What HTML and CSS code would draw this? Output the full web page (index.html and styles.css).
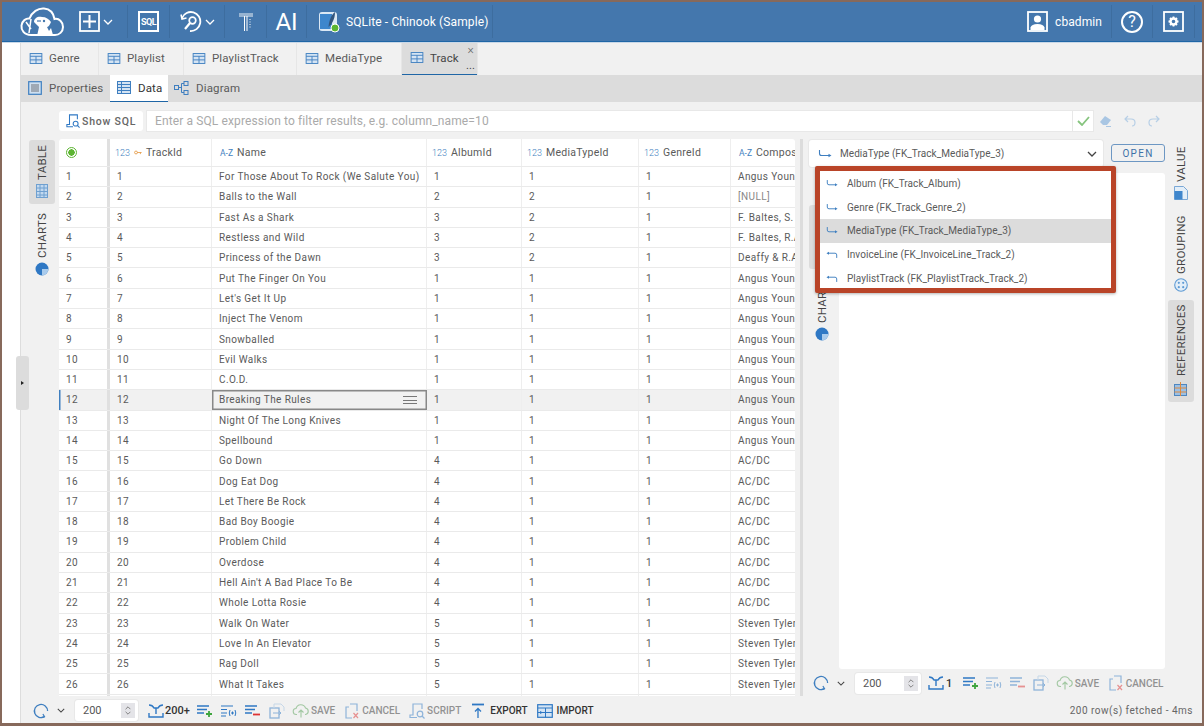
FILE: index.html
```html
<!DOCTYPE html>
<html lang="en">
<head>
    <meta charset="UTF-8">
    <title>CloudBeaver - Track</title>
    <link rel="stylesheet" href="styles.css">
</head>
<body>
<svg class="sprites">
    <symbol id="i-table" viewBox="0 0 14 12">
        <rect x=".6" y=".6" width="12.8" height="10.8" fill="#d5e4f3" stroke="#3f7fc0"/>
        <path d="M.6 3.6h12.8M.6 7.5h12.8M7 3.6v7.8" stroke="#3f7fc0" fill="none"/>
    </symbol>
    <symbol id="i-fk-out" viewBox="0 0 14 10">
        <path d="M1.5 1v3.5q0 2 2 2h8" fill="none" stroke="#3f7fc0" stroke-width="1.1"/>
        <path d="M10.5 4.8l3 1.7-3 1.7z" fill="#3f7fc0"/>
    </symbol>
    <symbol id="i-fk-in" viewBox="0 0 14 10">
        <path d="M12.5 9V5.5q0-2-2-2h-8" fill="none" stroke="#3f7fc0" stroke-width="1.1"/>
        <path d="M3.5 1.8l-3 1.7 3 1.7z" fill="#3f7fc0"/>
    </symbol>
    <symbol id="i-pie" viewBox="0 0 14 14">
        <circle cx="7" cy="7" r="6.5" fill="#2f78c4"/>
        <path d="M7 7V.5A6.5 6.5 0 0 0 .5 7z" fill="#a9cbec" transform="rotate(180 7 7)"/>
    </symbol>
    <symbol id="i-refresh" viewBox="0 0 16 16">
        <path d="M11.5 13.6A6.6 6.6 0 1 1 14.6 8" fill="none" stroke="#3f7fc0" stroke-width="1.3"/>
        <path d="M8.5 14.6l3-1-1.6-2.6" fill="none" stroke="#3f7fc0" stroke-width="1.2"/>
    </symbol>
    <symbol id="i-expand" viewBox="0 0 16 14">
        <path d="M1 1q3.5 0 5 3h4q1.500-3 5-3M8 4v6M1 9v4h14V9" fill="none" stroke="#2f78c4" stroke-width="1.4"/>
    </symbol>
    <symbol id="i-add" viewBox="0 0 18 14">
        <path d="M1 2h12M1 5.500h10M1 9h7" stroke="#2f78c4" stroke-width="1.5"/>
        <path d="M13 7v6M10 10h6" stroke="#3fa53f" stroke-width="1.800"/>
    </symbol>
    <symbol id="i-dup" viewBox="0 0 18 14">
        <path d="M1 2h12M1 5.500h6M1 9h6M1 12h5" stroke="#2f78c4" stroke-width="1.200"/>
        <path d="M10 6q-1.500 3 0 6M15 6q1.500 3 0 6M11 9h3M12.500 7.500v3" stroke="#2f78c4" fill="none"/>
    </symbol>
    <symbol id="i-del" viewBox="0 0 18 14">
        <path d="M1 2h12M1 5.500h10M1 9h7" stroke="#2f78c4" stroke-width="1.500"/>
        <path d="M9 10.500h7" stroke="#d33" stroke-width="1.800"/>
    </symbol>
    <symbol id="i-copy" viewBox="0 0 18 16">
        <rect x="2" y="5" width="9" height="10" fill="none" stroke="#2f78c4" stroke-width="1.300"/>
        <path d="M6 5V1h7l3 3v4" fill="none" stroke="#9dbfe0"/>
        <path d="M5 10h8m-2-2 2 2-2 2" fill="none" stroke="#2f78c4"/>
    </symbol>
    <symbol id="i-save" viewBox="0 0 16 14">
        <path d="M4 10.500H3.500a3 3 0 0 1-.5-6A5 5 0 0 1 12.500 4 3.300 3.300 0 0 1 12.500 10.500H12M8 13.500V6M5.500 8.500 8 6l2.500 2.500" fill="none" stroke="#55a055" stroke-width="1.100"/>
    </symbol>
    <symbol id="i-cancel" viewBox="0 0 16 16">
        <path d="M8 15H2V4h3M6 1h7v7" fill="none" stroke="#2f78c4" stroke-width="1.200"/>
        <path d="M9.500 10l4.500 5M14 10l-4.500 5" stroke="#d33" stroke-width="1.200"/>
    </symbol>
    <symbol id="i-script" viewBox="0 0 16 16">
        <path d="M6 1h-2v11H1v2.500h7M6 1h7v5" fill="none" stroke="#2f78c4" stroke-width="1.200"/>
        <circle cx="11" cy="11" r="2.800" fill="none" stroke="#2f78c4" stroke-width="1.200"/>
        <path d="M13 13l2.500 2.500" stroke="#2f78c4" stroke-width="1.200"/>
    </symbol>
    <symbol id="i-export" viewBox="0 0 16 16">
        <path d="M2 1.500h12" stroke="#2f78c4" stroke-width="1.800"/>
        <path d="M8 15V6M5 8.500 8 5.500l3 3" fill="none" stroke="#2f78c4" stroke-width="1.300"/>
    </symbol>
    <symbol id="i-import" viewBox="0 0 16 14">
        <rect x=".7" y=".7" width="14.600" height="12.600" fill="#d5e4f3" stroke="#2f78c4" stroke-width="1.200"/>
        <path d="M.7 4h14.600M.7 8.500h14.600M8.500 4v9.300" stroke="#2f78c4"/>
        <path d="M3 7l3 1.500L3 10z" fill="#2f78c4"/>
    </symbol>
    <symbol id="i-chevron" viewBox="0 0 10 6">
        <path d="M1 1l4 4 4-4" fill="none" stroke="currentColor" stroke-width="1.300"/>
    </symbol>
    <symbol id="i-grid" viewBox="0 0 12 14">
        <rect x=".5" y=".5" width="11" height="13" fill="#c3d9ef" stroke="#6fa0d0"/>
        <path d="M4 .5v13M8 .5v13M.5 4h11M.5 7.500h11M.5 11h11" stroke="#6fa0d0" fill="none"/>
    </symbol>
</svg>

<div class="frame">
    <header class="topbar">
        <div class="tb-cell tb-logo">
            <svg width="44" height="30" viewBox="0 0 44 30">
                <path d="M11 28C4 28 1 23 1.500 18.500 2 14 6 11 9.500 11.500 12 5 18 1 24 1.500 30 2 33.500 6 34.500 12 39 11 43 15 43 20 43 25 39 28 35 28Z" fill="none" stroke="#fff" stroke-width="2"/>
                <path d="M17 29 19 20 14 15C14 11 18 9 22 10 26 10 29 12 31 15 30 18 28 20 27 20L29 24 31 21 33 28Z" fill="#fff"/>
                <path d="M6 15 11 22M11 12 9 26" fill="none" stroke="#fff" stroke-width="1.500"/>
                <circle cx="24" cy="14" r="1.200" fill="#4477ad"/>
                <path d="M17 14h4" stroke="#4477ad" stroke-width="1.200"/>
            </svg>
        </div>
        <div class="tb-cell tb-add">
            <svg class="tb-box" width="21" height="21" viewBox="0 0 21 21">
                <rect x="1" y="1" width="19" height="19" fill="none" stroke="#fff" stroke-width="1.800"/>
                <path d="M10.500 4v13M4 10.500h13" stroke="#fff" stroke-width="2"/>
            </svg>
            <svg class="tb-chev" width="10" height="6"><use href="#i-chevron"/></svg>
        </div>
        <div class="tb-cell tb-sql">
            <span class="sql-box">SQL</span>
        </div>
        <div class="tb-cell tb-tools">
            <svg width="23" height="21" viewBox="0 0 23 21">
                <path d="M2 7A9.500 9.500 0 1 1 10 20" fill="none" stroke="#fff" stroke-width="1.800"/>
                <path d="M1 3.500 2 8 6.500 7" fill="none" stroke="#fff" stroke-width="1.500"/>
                <path d="M5 18l5-6" stroke="#fff" stroke-width="2.200"/>
                <circle cx="12.500" cy="9.500" r="3.300" fill="none" stroke="#fff" stroke-width="1.700"/>
            </svg>
            <svg class="tb-chev" width="10" height="6"><use href="#i-chevron"/></svg>
        </div>
        <div class="tb-cell tb-t">
            <svg width="16" height="20" viewBox="0 0 16 20">
                <path d="M1 2h14M1 4h14" stroke="#fff" stroke-width=".9"/>
                <path d="M6.500 4v15M9 4v15" stroke="#fff" stroke-width="1"/>
                <path d="M12 7v10" stroke="#fff" stroke-dasharray="1 1.500"/>
            </svg>
        </div>
        <div class="tb-cell tb-ai">AI</div>
        <div class="tb-cell tb-conn">
            <span class="conn-icon">
                <svg width="22" height="22" viewBox="0 0 22 22">
                    <rect x="1" y="1" width="18" height="19" rx="3" fill="#dbe8f5"/>
                    <rect x="2" y="3" width="12" height="15" fill="#3e86cc"/>
                    <path d="M17 1C13 4 11 10 10.500 16 14 13 17 8 17 1Z" fill="#33557d"/>
                    <circle cx="17" cy="17" r="4" fill="#5cb531" stroke="#fff"/>
                </svg>
            </span>
            <span>SQLite - Chinook (Sample)</span>
        </div>
        <div class="tb-spacer"></div>
        <div class="tb-cell tb-user">
            <svg width="21" height="21" viewBox="0 0 21 21">
                <rect x="1" y="1" width="19" height="19" fill="none" stroke="#fff" stroke-width="1.800"/>
                <circle cx="10.500" cy="8" r="3.600" fill="#fff"/>
                <path d="M3.500 19v-2.500q1-3.500 7-3.500t7 3.500V19z" fill="#fff"/>
            </svg>
            <span>cbadmin</span>
        </div>
        <div class="tb-cell tb-help">
            <span class="help-ring">?</span>
        </div>
        <div class="tb-cell tb-gear">
            <svg width="21" height="21" viewBox="0 0 21 21">
                <rect x="1" y="1" width="19" height="19" fill="none" stroke="#fff" stroke-width="1.800"/>
                <circle cx="10.500" cy="10.500" r="3" fill="none" stroke="#fff" stroke-width="2.400"/>
                <path d="M10.500 5.500v2M10.500 13.500v2M5.500 10.500h2M13.500 10.500h2M7 7l1.500 1.500M12.500 12.500 14 14M14 7l-1.500 1.500M8.500 12.500 7 14" stroke="#fff" stroke-width="1.800"/>
            </svg>
        </div>
    </header>

    <div class="main">
        <div class="left-strip"></div>
        <div class="workspace">
            <nav class="tabs">
                <div class="tab tab-genre"><svg width="14" height="11"><use href="#i-table"/></svg>Genre</div>
                <div class="tab tab-playlist"><svg width="14" height="11"><use href="#i-table"/></svg>Playlist</div>
                <div class="tab tab-pt"><svg width="14" height="11"><use href="#i-table"/></svg>PlaylistTrack</div>
                <div class="tab tab-media"><svg width="14" height="11"><use href="#i-table"/></svg>MediaType</div>
                <div class="tab tab-track active"><svg width="14" height="11"><use href="#i-table"/></svg>Track
                    <span class="tab-close">×</span>
                    <span class="tab-more">...</span>
                </div>
            </nav>
            <nav class="subtabs">
                <div class="subtab sub-props">
                    <svg width="14" height="14" viewBox="0 0 14 14"><rect x=".7" y=".7" width="12.600" height="12.600" fill="#cfe0f1" stroke="#3f7fc0" stroke-width="1.200"/><rect x="3" y="3" width="8" height="8" fill="#9fa9b5"/></svg>
                    Properties
                </div>
                <div class="subtab sub-data active">
                    <svg width="14" height="13" viewBox="0 0 14 13"><rect x=".5" y=".5" width="13" height="12" fill="#d5e4f3" stroke="#3f7fc0"/><path d="M.5 3.500h13M.5 6.500h13M.5 9.500h13M4.500.5v12" stroke="#3f7fc0" fill="none"/></svg>
                    Data
                </div>
                <div class="subtab sub-diagram">
                    <svg width="15" height="14" viewBox="0 0 15 14"><rect x=".5" y="4.500" width="4" height="4" fill="none" stroke="#3f7fc0"/><rect x="10" y=".5" width="4" height="4" fill="none" stroke="#3f7fc0"/><rect x="10" y="9.500" width="4" height="4" fill="none" stroke="#3f7fc0"/><path d="M4.500 6.500h3M7.500 2.500v9M7.500 2.500H10M7.500 11.500H10" stroke="#3f7fc0" fill="none"/></svg>
                    Diagram
                </div>
            </nav>

            <div class="filter-row">
                <button class="show-sql">
                    <svg width="14" height="14"><use href="#i-script"/></svg>
                    Show SQL
                </button>
                <div class="filter-input">Enter a SQL expression to filter results, e.g. column_name=10</div>
                <div class="filter-ok">
                    <svg width="13" height="10" viewBox="0 0 13 10"><path d="M1 5l4 4 7-8" fill="none" stroke="#86c47e" stroke-width="1.800"/></svg>
                </div>
                <div class="filter-actions">
                    <svg width="13" height="12" viewBox="0 0 13 12"><path d="M1 7l5-6 6 4-4 5H4z" fill="#a9c6e3"/><path d="M7 11.500h5" stroke="#a9c6e3"/></svg>
                    <svg width="12" height="12" viewBox="0 0 12 12"><path d="M4 1 1 4l3 3M1 4h6q4 0 4 3.500T8 11" fill="none" stroke="#b7cfe6" stroke-width="1.200"/></svg>
                    <svg width="12" height="12" viewBox="0 0 12 12"><path d="M8 1l3 3-3 3M11 4H5Q1 4 1 7.500T4 11" fill="none" stroke="#b7cfe6" stroke-width="1.200"/></svg>
                </div>
            </div>

            <div class="panes">
                <div class="rail rail-left">
                    <div class="vtab active vtab-table"><svg width="12" height="14"><use href="#i-grid"/></svg><span>TABLE</span></div>
                    <div class="vtab vtab-charts"><svg width="14" height="14"><use href="#i-pie"/></svg><span>CHARTS</span></div>
                </div>

                <div class="grid">
                    <div class="row head">
                        <div class="cell"><span class="status-dot"></span></div>
                        <div class="cell"><span class="t-num">123</span><svg class="key" width="8" height="5" viewBox="0 0 10 5"><circle cx="2.500" cy="2.500" r="1.800" fill="none" stroke="#e5963c"/><path d="M4 2.500h5.500M8 2.500v2" stroke="#e5963c"/></svg>TrackId</div>
                        <div class="cell"><span class="t-az">A-Z</span>Name</div>
                        <div class="cell"><span class="t-num">123</span>AlbumId</div>
                        <div class="cell"><span class="t-num">123</span>MediaTypeId</div>
                        <div class="cell"><span class="t-num">123</span>GenreId</div>
                        <div class="cell"><span class="t-az">A-Z</span>Composer</div>
                    </div>
                    <div class="row"><div class="cell">1</div><div class="cell">1</div><div class="cell">For Those About To Rock (We Salute You)</div><div class="cell">1</div><div class="cell">1</div><div class="cell">1</div><div class="cell">Angus Young, Malcolm Young</div></div>
                    <div class="row"><div class="cell">2</div><div class="cell">2</div><div class="cell">Balls to the Wall</div><div class="cell">2</div><div class="cell">2</div><div class="cell">1</div><div class="cell null">[NULL]</div></div>
                    <div class="row"><div class="cell">3</div><div class="cell">3</div><div class="cell">Fast As a Shark</div><div class="cell">3</div><div class="cell">2</div><div class="cell">1</div><div class="cell">F. Baltes, S. Kaufman</div></div>
                    <div class="row"><div class="cell">4</div><div class="cell">4</div><div class="cell">Restless and Wild</div><div class="cell">3</div><div class="cell">2</div><div class="cell">1</div><div class="cell">F. Baltes, R.A. Smith</div></div>
                    <div class="row"><div class="cell">5</div><div class="cell">5</div><div class="cell">Princess of the Dawn</div><div class="cell">3</div><div class="cell">2</div><div class="cell">1</div><div class="cell">Deaffy &amp; R.A. Smith</div></div>
                    <div class="row"><div class="cell">6</div><div class="cell">6</div><div class="cell">Put The Finger On You</div><div class="cell">1</div><div class="cell">1</div><div class="cell">1</div><div class="cell">Angus Young, Malcolm Young</div></div>
                    <div class="row"><div class="cell">7</div><div class="cell">7</div><div class="cell">Let's Get It Up</div><div class="cell">1</div><div class="cell">1</div><div class="cell">1</div><div class="cell">Angus Young, Malcolm Young</div></div>
                    <div class="row"><div class="cell">8</div><div class="cell">8</div><div class="cell">Inject The Venom</div><div class="cell">1</div><div class="cell">1</div><div class="cell">1</div><div class="cell">Angus Young, Malcolm Young</div></div>
                    <div class="row"><div class="cell">9</div><div class="cell">9</div><div class="cell">Snowballed</div><div class="cell">1</div><div class="cell">1</div><div class="cell">1</div><div class="cell">Angus Young, Malcolm Young</div></div>
                    <div class="row"><div class="cell">10</div><div class="cell">10</div><div class="cell">Evil Walks</div><div class="cell">1</div><div class="cell">1</div><div class="cell">1</div><div class="cell">Angus Young, Malcolm Young</div></div>
                    <div class="row"><div class="cell">11</div><div class="cell">11</div><div class="cell">C.O.D.</div><div class="cell">1</div><div class="cell">1</div><div class="cell">1</div><div class="cell">Angus Young, Malcolm Young</div></div>
                    <div class="row selected"><div class="cell">12</div><div class="cell">12</div><div class="cell focus">Breaking The Rules<span class="cell-menu"></span></div><div class="cell">1</div><div class="cell">1</div><div class="cell">1</div><div class="cell">Angus Young, Malcolm Young</div></div>
                    <div class="row"><div class="cell">13</div><div class="cell">13</div><div class="cell">Night Of The Long Knives</div><div class="cell">1</div><div class="cell">1</div><div class="cell">1</div><div class="cell">Angus Young, Malcolm Young</div></div>
                    <div class="row"><div class="cell">14</div><div class="cell">14</div><div class="cell">Spellbound</div><div class="cell">1</div><div class="cell">1</div><div class="cell">1</div><div class="cell">Angus Young, Malcolm Young</div></div>
                    <div class="row"><div class="cell">15</div><div class="cell">15</div><div class="cell">Go Down</div><div class="cell">4</div><div class="cell">1</div><div class="cell">1</div><div class="cell">AC/DC</div></div>
                    <div class="row"><div class="cell">16</div><div class="cell">16</div><div class="cell">Dog Eat Dog</div><div class="cell">4</div><div class="cell">1</div><div class="cell">1</div><div class="cell">AC/DC</div></div>
                    <div class="row"><div class="cell">17</div><div class="cell">17</div><div class="cell">Let There Be Rock</div><div class="cell">4</div><div class="cell">1</div><div class="cell">1</div><div class="cell">AC/DC</div></div>
                    <div class="row"><div class="cell">18</div><div class="cell">18</div><div class="cell">Bad Boy Boogie</div><div class="cell">4</div><div class="cell">1</div><div class="cell">1</div><div class="cell">AC/DC</div></div>
                    <div class="row"><div class="cell">19</div><div class="cell">19</div><div class="cell">Problem Child</div><div class="cell">4</div><div class="cell">1</div><div class="cell">1</div><div class="cell">AC/DC</div></div>
                    <div class="row"><div class="cell">20</div><div class="cell">20</div><div class="cell">Overdose</div><div class="cell">4</div><div class="cell">1</div><div class="cell">1</div><div class="cell">AC/DC</div></div>
                    <div class="row"><div class="cell">21</div><div class="cell">21</div><div class="cell">Hell Ain't A Bad Place To Be</div><div class="cell">4</div><div class="cell">1</div><div class="cell">1</div><div class="cell">AC/DC</div></div>
                    <div class="row"><div class="cell">22</div><div class="cell">22</div><div class="cell">Whole Lotta Rosie</div><div class="cell">4</div><div class="cell">1</div><div class="cell">1</div><div class="cell">AC/DC</div></div>
                    <div class="row"><div class="cell">23</div><div class="cell">23</div><div class="cell">Walk On Water</div><div class="cell">5</div><div class="cell">1</div><div class="cell">1</div><div class="cell">Steven Tyler, Joe Perry</div></div>
                    <div class="row"><div class="cell">24</div><div class="cell">24</div><div class="cell">Love In An Elevator</div><div class="cell">5</div><div class="cell">1</div><div class="cell">1</div><div class="cell">Steven Tyler, Joe Perry</div></div>
                    <div class="row"><div class="cell">25</div><div class="cell">25</div><div class="cell">Rag Doll</div><div class="cell">5</div><div class="cell">1</div><div class="cell">1</div><div class="cell">Steven Tyler, Joe Perry</div></div>
                    <div class="row"><div class="cell">26</div><div class="cell">26</div><div class="cell">What It Takes</div><div class="cell">5</div><div class="cell">1</div><div class="cell">1</div><div class="cell">Steven Tyler, Joe Perry</div></div>
                    <div class="row"><div class="cell"></div><div class="cell"></div><div class="cell"></div><div class="cell"></div><div class="cell"></div><div class="cell"></div><div class="cell"></div></div>
                </div>

                <div class="splitter"></div>

                <div class="ref-pane">
                    <div class="ref-head">
                        <div class="ref-select">
                            <svg width="14" height="10"><use href="#i-fk-out"/></svg>
                            <span>MediaType (FK_Track_MediaType_3)</span>
                            <svg class="ref-chev" width="10" height="6"><use href="#i-chevron"/></svg>
                        </div>
                        <button class="open-btn">OPEN</button>
                    </div>
                    <div class="ref-body">
                        <div class="rail rail-inner">
                            <div class="vtab active vtab-table"><svg width="12" height="14"><use href="#i-grid"/></svg><span>TABLE</span></div>
                            <div class="vtab vtab-charts"><svg width="14" height="14"><use href="#i-pie"/></svg><span>CHARTS</span></div>
                        </div>
                        <div class="ref-panel"></div>
                    </div>
                    <div class="tools tools-ref">
                        <svg width="16" height="16"><use href="#i-refresh"/></svg>
                        <svg class="chev" width="8" height="5"><use href="#i-chevron"/></svg>
                        <div class="num-input num-ref">200<span class="spin"><svg width="6" height="4"><use href="#i-chevron"/></svg><svg width="6" height="4"><use href="#i-chevron"/></svg></span></div>
                        <svg class="expand" width="16" height="14"><use href="#i-expand"/></svg>
                        <span class="count">1</span>
                        <svg width="18" height="14"><use href="#i-add"/></svg>
                        <svg class="off" width="18" height="14"><use href="#i-dup"/></svg>
                        <svg class="off" width="18" height="14"><use href="#i-del"/></svg>
                        <svg class="off" width="18" height="16"><use href="#i-copy"/></svg>
                        <div class="act off"><svg width="18" height="14"><use href="#i-save"/></svg>SAVE</div>
                        <div class="act off"><svg width="18" height="16"><use href="#i-cancel"/></svg>CANCEL</div>
                    </div>
                </div>

                <div class="rail rail-right">
                    <div class="vtab vtab-value">
                        <svg width="14" height="14" viewBox="0 0 14 14"><path d="M.5.500h9l4 4v9H.5z" fill="#e3eef8" stroke="#7aa8d6"/><rect x=".5" y="5" width="8" height="8.500" fill="#3f86cc"/></svg>
                        <span>VALUE</span>
                    </div>
                    <div class="vtab vtab-group">
                        <svg width="14" height="14" viewBox="0 0 14 14"><circle cx="7" cy="7" r="6.300" fill="#e3eef8" stroke="#5f9bd4" stroke-width="1.100"/><circle cx="4.800" cy="4.800" r="1.100" fill="#5f9bd4"/><circle cx="9.200" cy="4.800" r="1.100" fill="#5f9bd4"/><circle cx="4.800" cy="9.200" r="1.100" fill="#5f9bd4"/><circle cx="9.200" cy="9.200" r="1.100" fill="#5f9bd4"/></svg>
                        <span>GROUPING</span>
                    </div>
                    <div class="vtab active vtab-ref">
                        <svg width="13" height="14" viewBox="0 0 13 14"><rect x=".5" y="2.500" width="12" height="11" fill="#9cc0e4" stroke="#4d86c0"/><path d="M6.500 0v14M.5 6h12M.5 10h12" stroke="#e08a3c"/></svg>
                        <span>REFERENCES</span>
                    </div>
                </div>
            </div>

            <div class="tools tools-main">
                <svg width="16" height="16"><use href="#i-refresh"/></svg>
                <svg class="chev" width="8" height="5"><use href="#i-chevron"/></svg>
                <div class="num-input">200<span class="spin"><svg width="6" height="4"><use href="#i-chevron"/></svg><svg width="6" height="4"><use href="#i-chevron"/></svg></span></div>
                <svg class="expand" width="16" height="14"><use href="#i-expand"/></svg>
                <span class="count">200+</span>
                <svg width="18" height="14"><use href="#i-add"/></svg>
                <svg width="18" height="14"><use href="#i-dup"/></svg>
                <svg width="18" height="14"><use href="#i-del"/></svg>
                <svg class="off" width="18" height="16"><use href="#i-copy"/></svg>
                <div class="act off"><svg width="18" height="14"><use href="#i-save"/></svg>SAVE</div>
                <div class="act off"><svg width="18" height="16"><use href="#i-cancel"/></svg>CANCEL</div>
                <div class="act off"><svg width="18" height="16"><use href="#i-script"/></svg>SCRIPT</div>
                <div class="act act-on"><svg width="18" height="16"><use href="#i-export"/></svg>EXPORT</div>
                <div class="act act-on"><svg width="18" height="14"><use href="#i-import"/></svg>IMPORT</div>
                <div class="status">200 row(s) fetched - 4ms</div>
            </div>
        </div>
    </div>

    <!-- references dropdown, opened over the value panel -->
    <div class="ref-menu">
        <div class="ref-item"><svg width="12" height="9"><use href="#i-fk-out"/></svg>Album (FK_Track_Album)</div>
        <div class="ref-item"><svg width="12" height="9"><use href="#i-fk-out"/></svg>Genre (FK_Track_Genre_2)</div>
        <div class="ref-item current"><svg width="12" height="9"><use href="#i-fk-out"/></svg>MediaType (FK_Track_MediaType_3)</div>
        <div class="ref-item"><svg width="12" height="9"><use href="#i-fk-in"/></svg>InvoiceLine (FK_InvoiceLine_Track_2)</div>
        <div class="ref-item"><svg width="12" height="9"><use href="#i-fk-in"/></svg>PlaylistTrack (FK_PlaylistTrack_Track_2)</div>
    </div>

    <div class="nav-toggle"><span class="nav-arrow"></span></div>
</div>
</body>
</html>
```

FILE: styles.css
```css
* {
    box-sizing: border-box;
}

html, body {
    margin: 0;
    height: 100%;
    overflow: hidden;
}

body {
    font-family: Roboto, "Liberation Sans", sans-serif;
    font-size: 10px;
    color: #5a5a5a;
}

.sprites {
    display: none;
}

.frame {
    position: relative;
    width: 1204px;
    height: 726px;
    display: flex;
    flex-direction: column;
    border: 2px solid #87695b;
    border-bottom-width: 3px;
    background-color: #fff;
}

/* top bar */
.topbar {
    height: 40px;
    flex: none;
    display: flex;
    align-items: stretch;
    padding-right: 7px;
    background-color: #4477ad;
    border-bottom: 1.500px solid #1f66a6;
    box-shadow: 0 1px 0 #c9d8e8;
    color: #fff;
}

.tb-cell {
    display: flex;
    align-items: center;
    justify-content: center;
    margin: 3px 0;
    border-right: 1px solid #3d6d9f;
}

.tb-logo {
    width: 68px;
    justify-content: flex-start;
    padding-left: 18px;
    border-right: none;
}

.tb-add {
    width: 58px;
    gap: 3px;
    padding-right: 6px;
}

.tb-chev {
    color: #fff;
}

.tb-sql {
    width: 42px;
}

.sql-box {
    width: 21px;
    height: 21px;
    display: flex;
    align-items: center;
    justify-content: center;
    border: 2px solid #fff;
    color: #fff;
    font-size: 9px;
    font-weight: 700;
    letter-spacing: -0.5px;
}

.tb-tools {
    width: 55px;
    gap: 2px;
}

.tb-t {
    width: 42px;
}

.tb-ai {
    width: 40px;
    font-size: 24px;
    font-weight: 400;
}

.tb-conn {
    width: 186px;
    justify-content: flex-start;
    gap: 6px;
    padding-left: 11px;
    font-size: 12px;
    letter-spacing: 0.12px;
    white-space: nowrap;
}

.conn-icon {
    display: flex;
}

.tb-spacer {
    flex: 1;
}

.tb-user {
    width: 85px;
    justify-content: flex-start;
    gap: 7px;
    font-size: 12px;
    letter-spacing: 0.1px;
}

.tb-help {
    width: 41px;
}

.help-ring {
    width: 22px;
    height: 22px;
    display: flex;
    align-items: center;
    justify-content: center;
    border: 2px solid #fff;
    border-radius: 50%;
    font-size: 16px;
}

.tb-gear {
    width: 42px;
}

/* body */
.main {
    flex: 1;
    min-height: 0;
    display: flex;
    margin-top: 1px;
}

.left-strip {
    width: 18px;
    flex: none;
    background-color: #fff;
}

.workspace {
    flex: 1;
    min-width: 0;
    display: flex;
    flex-direction: column;
    background-color: #f1f1f1;
    border-left: 1px solid #ddd;
}

/* tabs */
.tabs {
    height: 32px;
    flex: none;
    display: flex;
    gap: 1px;
    background-color: #f1f1f1;
}

.tab {
    position: relative;
    display: flex;
    align-items: center;
    gap: 6px;
    padding-left: 8px;
    padding-bottom: 2px;
    font-size: 11.500px;
    letter-spacing: 0.12px;
    box-shadow: 1px 0 0 #e6e6e6;
}

.tab-genre { width: 77px; }
.tab-playlist { width: 84px; }
.tab-pt { width: 112px; }
.tab-media { width: 104px; }
.tab-track { width: 75px; }

.tab-track {
    background-color: #dcdcdc;
    border-bottom: 1.500px solid #1f66a6;
    color: #444;
}

.tab-close {
    position: absolute;
    top: 1px;
    right: 3px;
    font-size: 12px;
    font-weight: 300;
    line-height: 12px;
    color: #666;
}

.tab-more {
    position: absolute;
    right: 2px;
    bottom: 4px;
    font-size: 11px;
    line-height: 8px;
}

.subtabs {
    height: 27px;
    flex: none;
    display: flex;
    background-color: #dcdcdc;
}

.subtab {
    display: flex;
    align-items: center;
    gap: 7px;
    padding-left: 7px;
    padding-bottom: 1px;
    font-size: 11.500px;
    letter-spacing: 0.15px;
}

.sub-props { width: 89px; }
.sub-data { width: 58px; }
.sub-diagram { padding-left: 6px; }

.sub-data {
    background-color: #fff;
    border-bottom: 1.500px solid #1f66a6;
    color: #333;
}

/* filter */
.filter-row {
    height: 37px;
    flex: none;
    display: flex;
    align-items: flex-start;
    padding: 9px 0 0 38px;
}

.show-sql {
    width: 84px;
    height: 20px;
    margin-right: 4px;
    display: flex;
    align-items: center;
    gap: 2px;
    padding: 0 0 0 7px;
    border: none;
    border-radius: 3px;
    background-color: #fff;
    color: #666;
    font-family: inherit;
    font-size: 10.500px;
    font-weight: 500;
    letter-spacing: 0.8px;
}

.filter-input {
    width: 926px;
    height: 20px;
    line-height: 20px;
    padding-left: 8px;
    background-color: #fff;
    color: #aaa;
    font-size: 12px;
    letter-spacing: 0.12px;
    box-shadow: 0 0 0 1px #e8e8e8;
}

.filter-ok {
    width: 20px;
    height: 20px;
    display: flex;
    align-items: center;
    justify-content: center;
    background-color: #fff;
    box-shadow: 0 0 0 1px #e8e8e8;
}

.filter-actions {
    display: flex;
    align-items: center;
    gap: 12px;
    height: 20px;
    margin-left: 6px;
}

/* panes */
.panes {
    flex: 1;
    min-height: 0;
    display: flex;
}

.rail {
    display: flex;
    flex-direction: column;
    flex: none;
}

.rail-left {
    width: 38px;
    padding: 1px 4px 0 8px;
}

.vtab {
    writing-mode: vertical-rl;
    transform: rotate(180deg);
    width: 26px;
    display: flex;
    align-items: center;
    gap: 4px;
    padding: 6px 0;
    border-radius: 3px;
    font-size: 11.500px;
    letter-spacing: 0.25px;
    color: #444;
}

.vtab svg {
    flex: none;
    transform: rotate(180deg);
}

.vtab.active {
    background-color: #dcdcdc;
}

.vtab-table {
    height: 64px;
    margin-bottom: 2px;
}

.vtab-charts {
    height: 72px;
    padding: 2px 0;
}

.grid {
    width: 736px;
    flex: none;
    overflow: hidden;
    background-color: #fff;
    border-radius: 3px 3px 0 0;
}

.row {
    display: grid;
    grid-template-columns: 51px 102px 215px 95px 117px 92px 200px;
    height: 20.300px;
    border-bottom: 1.500px solid #eaeaea;
    letter-spacing: 0.4px;
}

.cell {
    display: flex;
    align-items: center;
    padding-left: 7px;
    white-space: nowrap;
    overflow: hidden;
    border-right: 1.500px solid #eee;
}

.cell:first-child {
    border-right: 3px solid #e0e0e0;
}

.cell.null {
    color: #888;
}

.row.head {
    height: 28px;
    font-size: 10.500px;
    letter-spacing: 0.25px;
}

.head .cell {
    padding-left: 5px;
}

.t-num, .t-az {
    margin-right: 4px;
    color: #3f7fc0;
    font-size: 9px;
    font-weight: 300;
    letter-spacing: 0;
}

.t-az {
    font-weight: 400;
    font-size: 8.500px;
    margin-left: 3px;
    margin-right: 4px;
}

.key {
    margin-right: 4px;
}

.status-dot {
    width: 11px;
    height: 11px;
    border-radius: 50%;
    border: 1.500px solid #5cb531;
    background: radial-gradient(circle, #5cb531 0 3px, #fff 3.400px);
    margin-left: 2px;
}

.row.selected {
    background-color: #f1f1f1;
    box-shadow: inset 1.500px 0 0 #3f7fc0;
}

.cell.focus {
    position: relative;
    box-shadow: inset 0 0 0 1.500px #888;
    border-right: none;
}

.cell-menu {
    position: absolute;
    right: 10px;
    top: 6px;
    width: 14px;
    height: 8px;
    border-top: 1px solid #777;
    border-bottom: 1px solid #777;
}

.cell-menu::before {
    content: "";
    display: block;
    margin-top: 2.500px;
    border-top: 1px solid #777;
}

.splitter {
    width: 3px;
    flex: none;
    margin-left: 5px;
    background-color: #dcdcdc;
}

/* references pane */
.ref-pane {
    width: 362px;
    flex: none;
    display: flex;
    flex-direction: column;
    padding-left: 6px;
}

.ref-head {
    height: 34px;
    flex: none;
    display: flex;
    align-items: flex-start;
    padding-top: 1px;
}

.ref-select {
    width: 294px;
    height: 27px;
    flex: none;
    display: flex;
    align-items: center;
    gap: 8px;
    padding: 0 6px 0 9px;
    background-color: #fff;
    border-radius: 3px;
    font-size: 10px;
    letter-spacing: 0.06px;
    box-shadow: 0 0 0 1px #e8e8e8;
}

.ref-chev {
    margin-left: auto;
    color: #444;
}

.open-btn {
    width: 54px;
    height: 18px;
    flex: none;
    margin: 4px 0 0 8px;
    padding: 0;
    border: 1px solid #6d97c3;
    border-radius: 3px;
    background-color: transparent;
    color: #3d72a8;
    font-family: inherit;
    font-size: 10px;
    font-weight: 400;
    letter-spacing: 1.300px;
}

.ref-body {
    flex: 1;
    min-height: 0;
    display: flex;
    gap: 4px;
}

.rail-inner {
    width: 26px;
    padding-top: 32px;
}

.ref-panel {
    flex: 1;
    background-color: #fff;
    border-radius: 3px;
}

.rail-right {
    width: 37px;
    padding: 1px 0 0 3px;
}

.vtab-value {
    height: 64px;
    margin-bottom: 2px;
    padding: 4px 0;
}

.vtab-group {
    height: 92px;
    margin-bottom: 2px;
}

.vtab-ref {
    height: 102px;
    gap: 6px;
}

/* bottom toolbars */
.tools {
    flex: none;
    display: flex;
    align-items: center;
    gap: 6px;
    font-size: 10px;
    font-weight: 500;
    color: #333;
}

.tools-main {
    height: 27px;
    padding: 2px 9px 0 12px;
}

.tools-ref {
    height: 27px;
    gap: 5.500px;
    padding: 1px 0 0 4px;
}

.chev {
    color: #444;
    margin: 0 2px;
}

.num-input {
    width: 63px;
    height: 21px;
    margin: 0 4px 0 2px;
    display: flex;
    align-items: center;
    justify-content: space-between;
    padding: 0 3px 0 8px;
    background-color: #fff;
    border-radius: 3px;
    box-shadow: 0 0 0 1px #e8e8e8;
    font-size: 11px;
    font-weight: 400;
    color: #555;
}

.num-ref {
    width: 66px;
    margin-left: 3px;
    margin-right: 1px;
}

.spin {
    width: 14px;
    height: 15px;
    display: flex;
    flex-direction: column;
    align-items: center;
    justify-content: center;
    gap: 1px;
    background-color: #e4e4e8;
    color: #666;
}

.spin svg:first-child {
    transform: rotate(180deg);
}

.expand {
    margin-right: -5px;
}

.count {
    font-size: 11px;
}

.tools-ref .count {
    margin: 0 4px 0 2px;
}

.act {
    display: flex;
    align-items: center;
    gap: 1px;
}

.act + .act {
    margin-left: 2px;
}

.act-on {
    gap: 3px;
}

.off {
    opacity: 0.5;
}

.status {
    margin-left: auto;
    color: #666;
    font-size: 10px;
    font-weight: 400;
    letter-spacing: 0.5px;
}

/* dropdown */
.ref-menu {
    position: absolute;
    left: 813px;
    top: 164px;
    width: 301px;
    height: 127px;
    padding: 1px 0;
    background-color: #fff;
    border: 5px solid #b94428;
    border-radius: 2px;
    box-shadow: 0 1px 3px rgba(0, 0, 0, 0.3);
}

.ref-item {
    height: 23.600px;
    display: flex;
    align-items: center;
    gap: 9px;
    padding-left: 6px;
    font-size: 10px;
    letter-spacing: 0.06px;
}

.ref-item.current {
    background-color: #dcdcdc;
}

.nav-toggle {
    position: absolute;
    left: 14px;
    top: 354px;
    width: 13px;
    height: 54px;
    display: flex;
    align-items: center;
    justify-content: center;
    background-color: #dcdcdc;
    border-radius: 3px;
}

.nav-arrow {
    border-left: 3px solid #222;
    border-top: 2.500px solid transparent;
    border-bottom: 2.500px solid transparent;
}
```
